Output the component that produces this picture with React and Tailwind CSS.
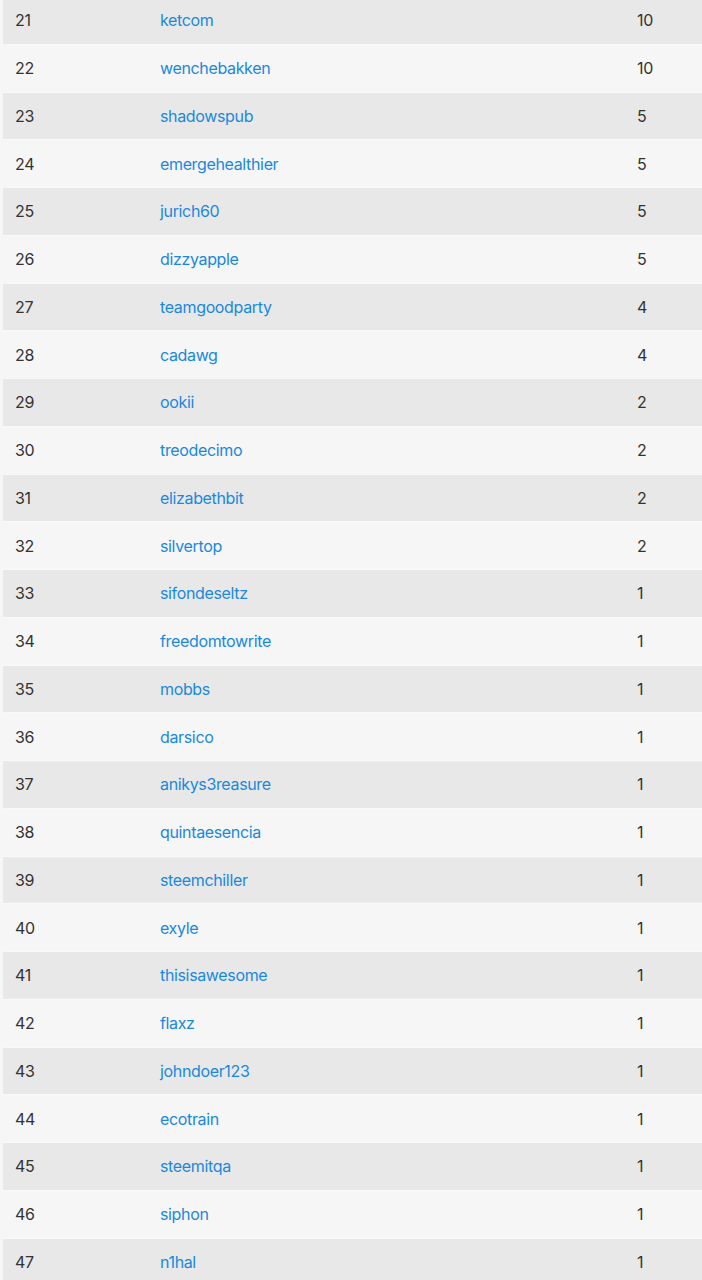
import React from 'react';

const rows = [
  [21, 'ketcom', 10],
  [22, 'wenchebakken', 10],
  [23, 'shadowspub', 5],
  [24, 'emergehealthier', 5],
  [25, 'jurich60', 5],
  [26, 'dizzyapple', 5],
  [27, 'teamgoodparty', 4],
  [28, 'cadawg', 4],
  [29, 'ookii', 2],
  [30, 'treodecimo', 2],
  [31, 'elizabethbit', 2],
  [32, 'silvertop', 2],
  [33, 'sifondeseltz', 1],
  [34, 'freedomtowrite', 1],
  [35, 'mobbs', 1],
  [36, 'darsico', 1],
  [37, 'anikys3reasure', 1],
  [38, 'quintaesencia', 1],
  [39, 'steemchiller', 1],
  [40, 'exyle', 1],
  [41, 'thisisawesome', 1],
  [42, 'flaxz', 1],
  [43, 'johndoer123', 1],
  [44, 'ecotrain', 1],
  [45, 'steemitqa', 1],
  [46, 'siphon', 1],
  [47, 'n1hal', 1],
];

function App() {
  return (
    <div className="min-h-screen bg-[#f6f6f6] pl-[3px] overflow-hidden font-['Inter',sans-serif] text-[16px] tracking-[-0.35px]">
      <div className="-mt-[4px]">
        {rows.map(([rank, name, count], i) => (
          <div
            key={rank}
            className={`flex items-center h-[47.75px] border-t border-[#f9f9f9] ${i % 2 === 0 ? 'bg-[#e8e8e8]' : 'bg-[#f6f6f6]'}`}
          >
            <div className="w-[157px] pl-[12px] text-[#333333]">{rank}</div>
            <div className="flex-1 text-[#1a88dd]">{name}</div>
            <div className="w-[65px] text-[#333333]">{count}</div>
          </div>
        ))}
      </div>
    </div>
  );
}

export default App;
